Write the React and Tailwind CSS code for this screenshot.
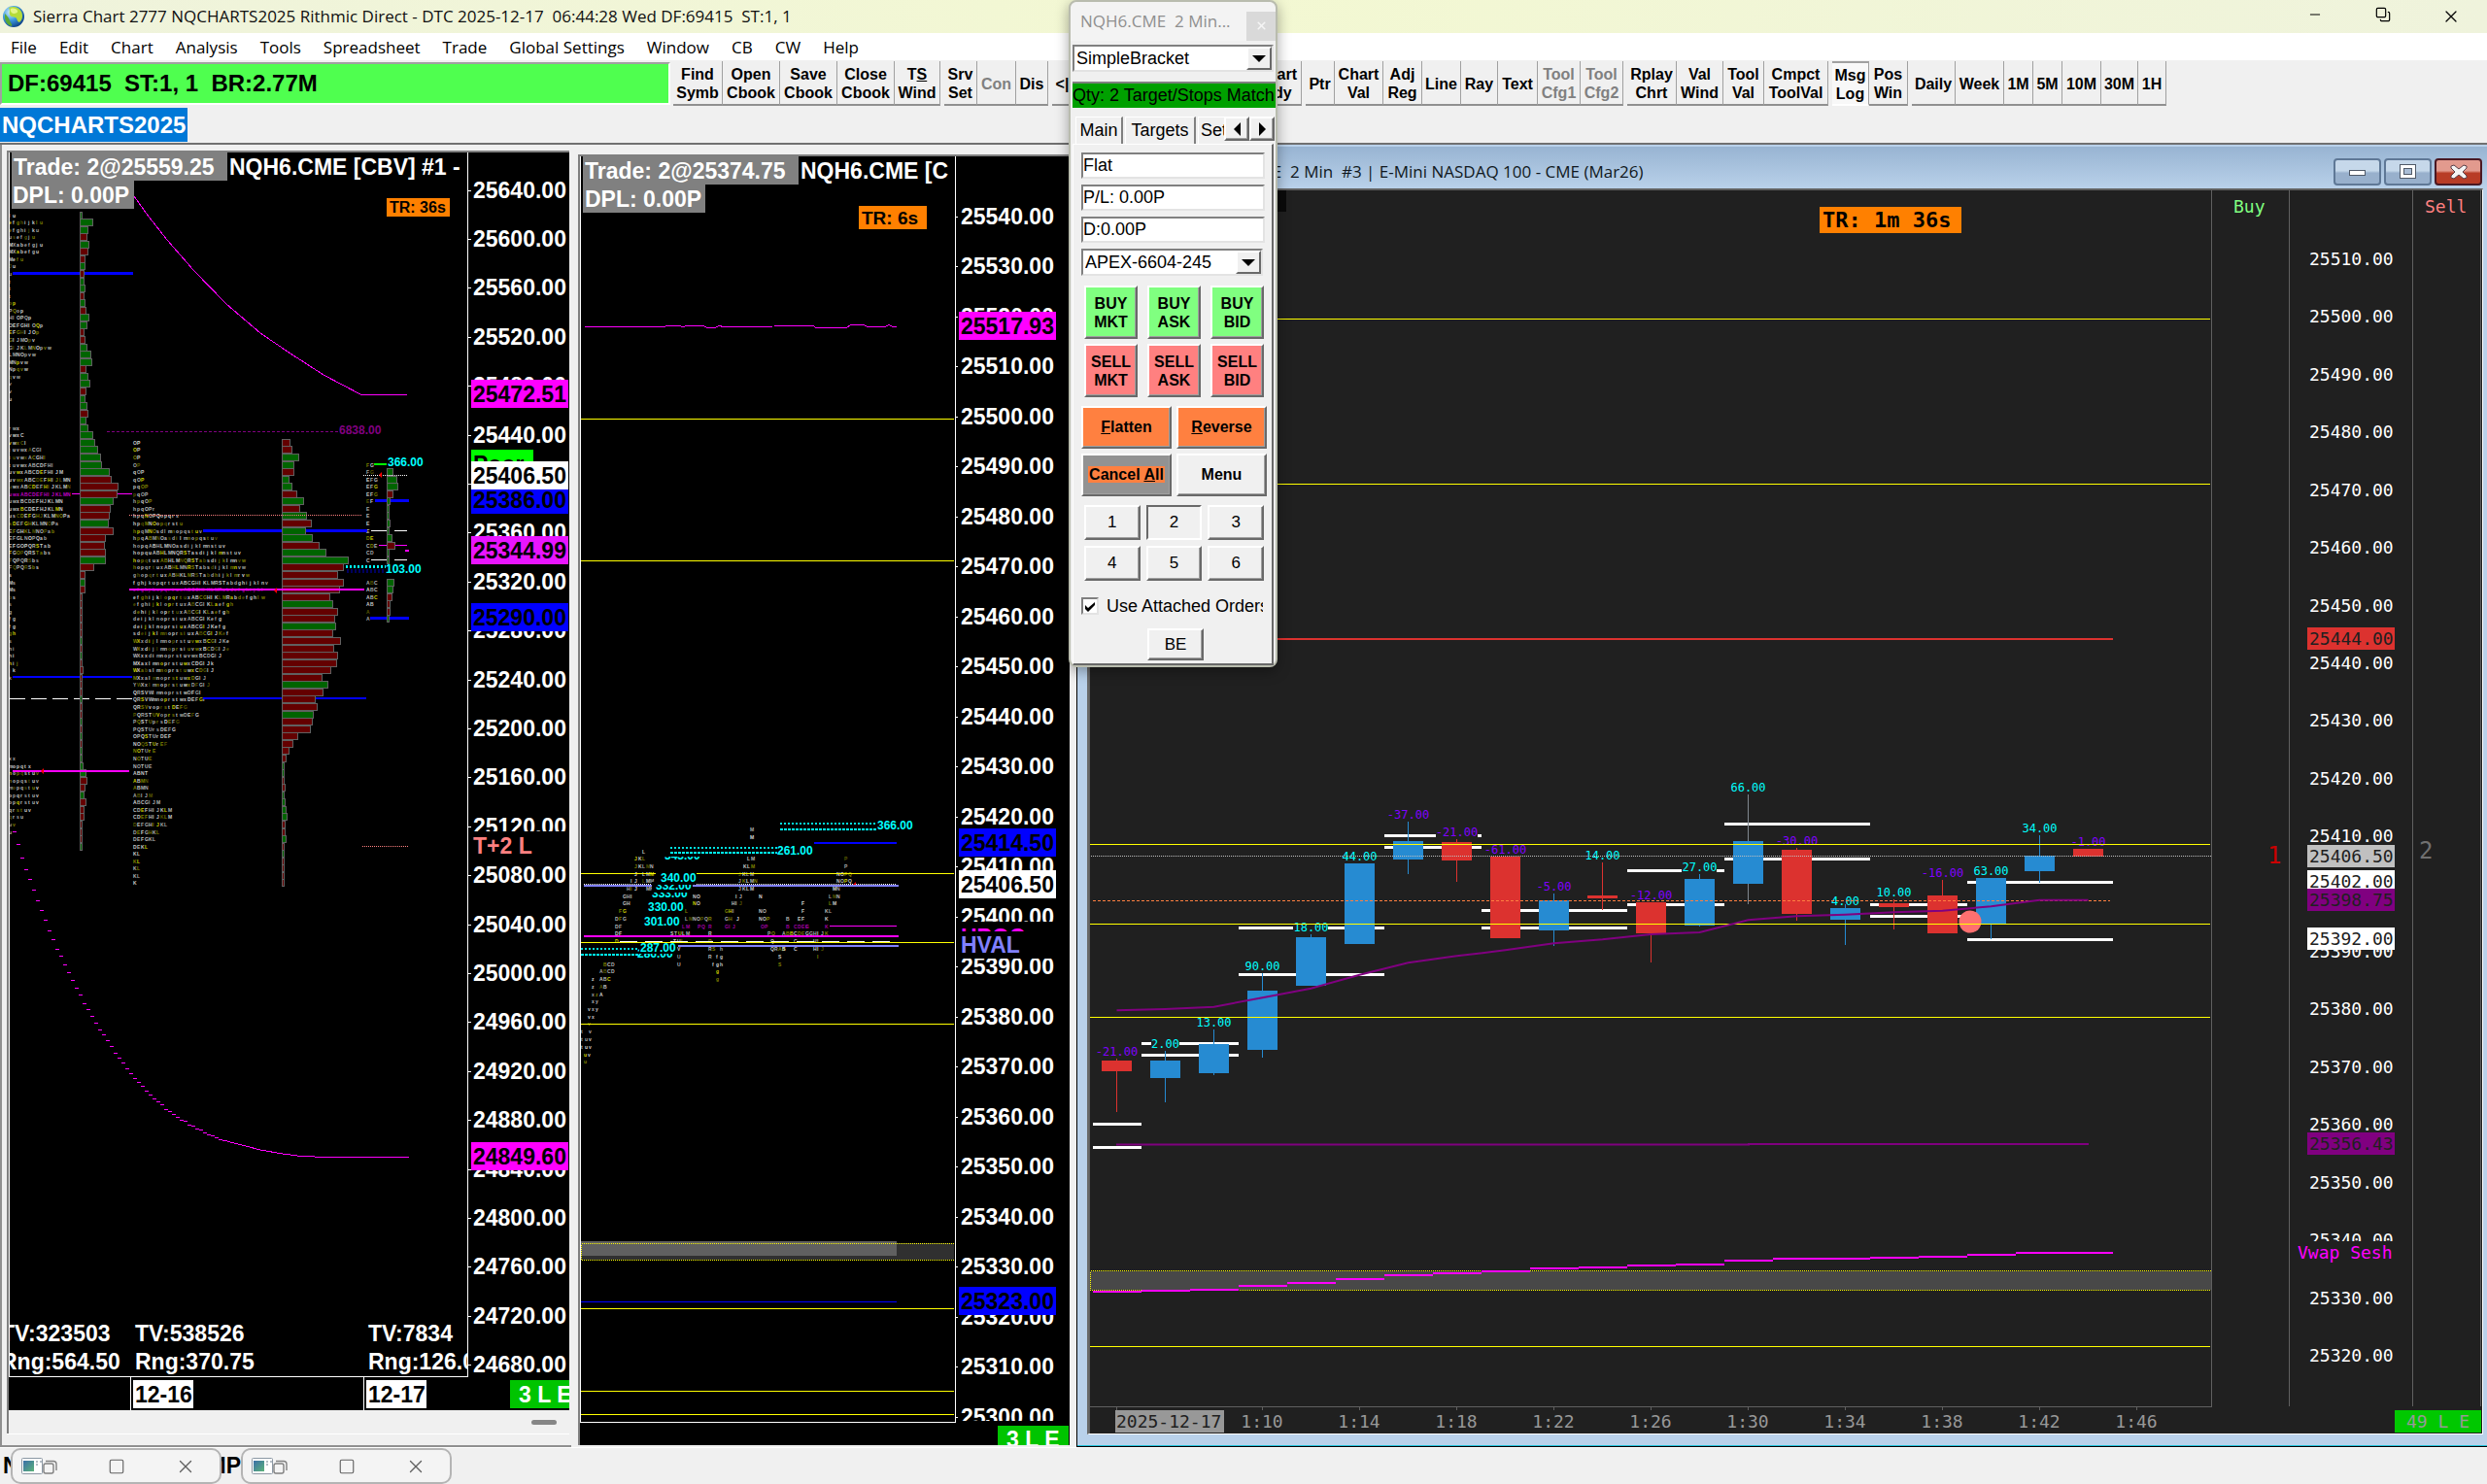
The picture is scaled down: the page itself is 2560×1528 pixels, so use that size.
import React from "react";
import { Minus, Copy, X, Square } from "lucide-react";

const ARIAL = "font-['Liberation_Sans',Arial,sans-serif]";
const SEGOE = "font-['Open_Sans','Noto_Sans',sans-serif]";
const MONO = "font-['DejaVu_Sans_Mono',monospace]";

const RAISED = "border-2 border-t-white border-l-white border-r-[#696969] border-b-[#696969]";
const SUNKEN = "border-2 border-t-[#808080] border-l-[#808080] border-r-[#e3e3e3] border-b-[#e3e3e3]";

/* ---------- chart primitives ---------- */

function H({ x1, x2, y, w = 1, c, dash }) {
  return <line x1={x1} x2={x2} y1={y} y2={y} stroke={c} strokeWidth={w} strokeDasharray={dash} shapeRendering="crispEdges" />;
}

function V({ x, y1, y2, w = 1, c }) {
  return <line x1={x} x2={x} y1={y1} y2={y2} stroke={c} strokeWidth={w} shapeRendering="crispEdges" />;
}

function Box({ x, y, w, h, c }) {
  return <rect x={x} y={y} width={w} height={h} fill={c} shapeRendering="crispEdges" />;
}

/* bold label of the two profile charts, centred on y */
function Big({ x, y, c = "#fff", children }) {
  return (
    <text x={x} y={y + 8} fill={c} className="text-[23px] font-bold whitespace-pre">
      {children}
    </text>
  );
}

function Small({ x, y, c = "#00ffff", children }) {
  return (
    <text x={x} y={y + 4} fill={c} className="text-[12px] font-bold">
      {children}
    </text>
  );
}

function Tag({ x, y, w = 100, h = 29, bg, c = "#000", children }) {
  return (
    <g>
      <Box x={x - 2} y={y} w={w} h={h} c={bg} />
      <Big x={x} y={y + h / 2} c={c}>{children}</Big>
    </g>
  );
}

const TPO_COLORS = ["#c8c8c8", "#b4b4b4", "#c8c8c8", "#d8d8d8", "#808000", "#c8c8c8", "#a8a8a8", "#d0d000", "#b8b8b8", "#5a5a00"];

/* one row of time-price letters, a cell of 4px per letter */
function Tpo({ x, y, s, seed, c }) {
  return (
    <text y={y + 2} className="text-[5px] font-bold">
      {s.split("").map((ch, i) =>
        ch === " " ? null : (
          <tspan key={i} x={x + i * 4} fill={c || TPO_COLORS[(seed * 7 + i * i * 3 + Math.floor((i + seed) / 3) * 5) % 10]}>
            {ch}
          </tspan>
        )
      )}
    </text>
  );
}

const rowY = (k) => 221.5 + k * 7.56;

function Histogram({ x, start, data }) {
  return (
    <g stroke="#606060" strokeWidth="1" shapeRendering="crispEdges">
      {data.map(([w, g], i) => (
        <rect key={i} x={x} y={Math.round(rowY(start + i) - 4)} width={w} height={7} fill={g ? "#006400" : "#640000"} />
      ))}
    </g>
  );
}

/* ---------- chart 1 ---------- */

const parse = (s) => s.split(" ").map((t) => [parseInt(t, 10), t.endsWith("g")]);

const HIST1 = parse(
  "2g 13g 8g 7r 9g 8r 5r 5g 4r 4g 5g 4r 5g 6r 9g 7g 4r 5r 7g 11g 12g 6r 8g 10g 6r 5g 7g 8r 6g 8g 13g 15g 18g 21g 22g 30g 32r 39r 38r 34g 31r 30r 29g 34r 26r 25r 26r 26g 14r 5r 5g 5r 2r 2r 2r 2r 2r 2r 2g 2r 2g 2r 3r 2r 2r 2r 2g 2r 2r 2g 2r 2g 2r 2g 2g 3g 6g 7r 5r 4g 6r 4r 4r 2r 2r 2r 2g"
);
const HIST2 = parse(
  "8r 10r 17g 12g 12r 7g 10g 15r 22g 18r 25g 30r 24g 31g 38r 45g 68g 63r 57r 63r 59r 49r 52g 57r 54r 55g 52r 60r 53r 57r 56r 50r 41r 47g 42r 34r 36r 32g 31r 29r 16r 11r 7r 4r 2g 2g 2r 3r 2g 3g 4g 5g 3r 3r 4g 2r 2g 2r 2r 2r 2r"
);
const HIST3A = parse("6g 10g 11g 6r 3g 2g 2g 3g 2g 5g 8r 2g 2g");
const HIST3B = parse("7g 6g 5r 3r 3r 2g");

const COL1 =
  "lu|efghijklu|efghijku|usefgju|MXabefgju|MXabefgu|Mefu|Ju|u|t|t|t|op|PQop|HIOPQp|OEFGHIOQp|EFGHIJOp|GIJMOpv|GIJKLMNOpvw|LMNOpvw|MNpvw|Npqvw|qvw|v|v|u||||rwx|vwxC|vwxCI|tuvwxACGI|tuvwxACGHI|tuvwxABCDFHI|uvwxABCDEFHIJM|uvwxABCDEFHIJLMN|uwxABCDEFHIJKLMN|uwxABCDEFHIJKLMN|uwxBCDEFHJKLMN|uwxBCDEFHJKLMN|usCDEFGHJKLMNOPa|sDEFGHKLMNOPa|EFGHKLMNOPab|EFGLNOPQab|EFGOPQRSTab|FGOPQRSTabs|FQPQRSbs|FQPQRSbs|s|Ms|Ms|bs|s|g|fg|fg|gh|s|hi|hi|hij|jk|k|||||||||||xx|mopqtx|nopqstuv|nopqstuv|mopqstuv|opqrstuv|opqrstuv|qrstuv|qrsu|uv|u".split("|");
const COL2 =
  "OP|OP|OP|OP|qOP|qOP|pqOP|pqOP|hpqOP|hpqOPr|hpqNOPQopqrs|hpqMNOopqrstu|hpqMNOsdlmnopqstuv|hpqABMNOasdilmnopqstuv|hopqABHLMNOasdijklmnstuv|hopquABHLMNQRSTasdijklmnstuv|hopqtuxABHLMNQRSTabsdijklmnvw|hopqrtuxABHLMNRSTabsdijklmnvw|ghopqrtuxABHKLMRSTabdhijklmrvw|fghjkopqrtuxABCGHIKLMRSTabdghijklnv|efghjkopqrtuxABCGHIKLMRabdefghijkl|efghijklopqrtuxABCGHIKLMRabdefghlw|efghijkloprtuxABCGIKLaefgh|dehijkloprtuxABCGIKLaefgh|deijklnoprsiuxABCGIKefg|deijklnoprsiuxABCGIJKefg|sdeijklmnoprsiuxABCGIJKef|WXxdijlmnoprstuvwxBCGIJKe|WXxdijlmnoprsiuvwxBCDGIJe|WXxxdimnoprstuvwxBCDGIJ|MXaxlmnoprstuwxCDGIJk|WXabslmnoprstuwxCDGIJ|MXxalmnoprstuwxDGIJ|YWXxlmnoprstuwxDFGIJ|QRSVWlmnoprstwDFGI|QRSVWmnoprstwxDEFGI|QRSVvoprstDEFG|PQRSTUVoprstwDEFG|PQSTUprsDEFG|PQSTUrsDEFG|OPQSTUrDEF|NOQSTUrEF|NOTUrE|NOTUE|NOTUE|ABNT|ABMN|ABMN|ABIJM|ABCGIJM|CDEFHIJKLM|CDEFHIJKLM|DEFGHIJKL|DEFGHKL|DEFGKL|DEKL|KL|KL|KL|KL|K".split("|");
const COL3 = "FG|FG|EFG|EFG|EFG|EF|E|E|E|E|DE|CDE|CD|C|||ABC|ABC|ABC|AB|A|A".split("|");

const LOWER = [354, 378, 402, 424, 443, 463, 483, 500, 518, 538, 555, 572, 586, 602, 616, 630, 645, 658, 673, 685, 697, 709, 722, 732, 743, 754, 765, 774, 784, 794, 803, 812, 820, 828, 836, 844, 850, 856, 862, 870, 875, 879, 885, 890, 893, 899, 902, 906, 909, 914, 917, 920, 923, 926, 929];

const PRICES1 = Array.from({ length: 25 }, (_, i) => 25640 - i * 40);

function ProfileChart() {
  return (
    <svg className={`block h-full w-full bg-black ${ARIAL}`} role="img" aria-label="NQH6.CME CBV #1">
      <clipPath id="plot1"><rect x="10" y="157" width="471" height="1260" /></clipPath>
      <g transform="translate(-9 -157)">
        <g clipPath="url(#plot1)">
          {COL1.map((s, k) => s && <Tpo key={k} x={9} y={rowY(k)} s={s} seed={k} c={k === 38 ? "#c000c0" : undefined} />)}
          {COL2.map((s, k) => <Tpo key={k} x={137} y={rowY(k + 31)} s={s} seed={k} c={k === 20 ? "#900090" : undefined} />)}
          {COL3.map((s, k) => s && <Tpo key={k} x={377} y={rowY(k + 34)} s={s} seed={k + 2} />)}

          <H x1={13} x2={137} y={281.5} w={3} c="#0000ff" />
          <H x1={209} x2={378} y={546.5} w={3} c="#0000ff" />
          <H x1={386} x2={421} y={515.5} w={3} c="#0000ff" />
          <H x1={381} x2={421} y={636.5} w={3} c="#0000ff" />
          <H x1={13} x2={136} y={697} w={2} c="#0000ff" />
          <H x1={209} x2={377} y={719} w={2} c="#0000ff" />
          <H x1={10} x2={136} y={719.5} c="#fff" dash="16 6" />
          <H x1={74} x2={136} y={508.5} c="#ff00ff" />

          <Histogram x={82.5} start={0} data={HIST1} />
          <Histogram x={290.5} start={31} data={HIST2} />
          <Histogram x={398.5} start={35} data={HIST3A} />
          <Histogram x={398.5} start={50} data={HIST3B} />

          <H x1={133} x2={375} y={607} w={2} c="#ff00ff" />
          <H x1={13} x2={133} y={794} w={2} c="#ff00ff" />
          <H x1={110} x2={349} y={444.5} c="#800080" dash="3 2" />
          <H x1={133} x2={372} y={530.5} c="#ff8080" dash="1 1" />
          <H x1={373} x2={420} y={871.5} c="#ff8080" dash="1 1" />
          <H x1={374} x2={419} y={489.5} c="#fff" dash="1 1" />
          <H x1={385} x2={398} y={478} w={2} c="#00ff00" />
          <H x1={382} x2={398} y={546.5} c="#fff" />
          <H x1={406} x2={419} y={546.5} c="#fff" />
          <H x1={382} x2={398} y={576.5} c="#fff" />
          <H x1={406} x2={419} y={576.5} c="#fff" />
          <H x1={390} x2={398} y={561.5} c="#ff00ff" />
          <H x1={407} x2={419} y={561.5} c="#ff00ff" />
          <Box x={417} y={566} w={4} h={2} c="#ff00ff" />
          <H x1={356} x2={397} y={583.5} w={3} c="#00ffff" dash="2 2" />
          <H x1={357} x2={397} y={588} w={4} c="#000060" dash="2 2" />
          <path d="M393 486 l-3 3 3 3z M285 605 l-3 3 3 3z M45 791 l-3 3 3 3z" fill="#f00" />

          <Small x={349} y={443} c="#800080">6838.00</Small>
          <Small x={399} y={476}>366.00</Small>
          <Small x={397} y={586}>103.00</Small>

          <polyline
            points="138,202 153,223 172,247 199,278 233,313 268,343 299,364 333,386 371,406 419,406"
            fill="none" stroke="#ff00ff" strokeWidth="1" shapeRendering="crispEdges"
          />
          {LOWER.map((v, i) => (
            <H key={i} x1={13 + i * 4} x2={17 + i * 4} y={Math.round(660 + v / 1.806) + 0.5} c="#ff00ff" />
          ))}
          <polyline
            points="230,1174 241,1177 253,1180 268,1184 291,1188 306,1190 333,1191.5 421,1191.5"
            fill="none" stroke="#ff00ff" strokeWidth="1" shapeRendering="crispEdges"
          />

          <Big x={1} y={1373}>TV:323503</Big>
          <Big x={1} y={1402}>Rng:564.50</Big>
          <Big x={139} y={1373}>TV:538526</Big>
          <Big x={139} y={1402}>Rng:370.75</Big>
          <Big x={379} y={1373}>TV:7834</Big>
          <Big x={379} y={1402}>Rng:126.00</Big>

          <Box x={12} y={157} w={222} h={29} c="#808080" />
          <Box x={12} y={186} w={126} h={29} c="#808080" />
          <Big x={14} y={172}>Trade: 2@25559.25</Big>
          <Big x={236} y={172}>NQH6.CME [CBV] #1 -</Big>
          <Big x={13} y={201}>DPL: 0.00P</Big>
          <Box x={398} y={204} w={65} h={19} c="#ff8000" />
          <text x={401} y={219} className="text-[16px] font-bold">TR: 36s</text>
        </g>

        <V x={9.5} y1={157} y2={1417} c="#fff" />
        <V x={481.5} y1={157} y2={1418} c="#fff" />
        <H x1={9} x2={482} y={1417.5} c="#fff" />
        {PRICES1.map((p, i) => {
          const y = Math.round(195.5 + i * 50.4);
          return (
            <g key={p}>
              <H x1={482} x2={485} y={y + 0.5} c="#fff" />
              <Big x={487} y={y}>{p.toFixed(2)}</Big>
            </g>
          );
        })}
        <Tag x={487} y={391} bg="#ff00ff">25472.51</Tag>
        <Tag x={487} y={463} w={64} bg="#00ff00">Poor</Tag>
        <Tag x={487} y={500} bg="#0000ff">25386.00</Tag>
        <Tag x={487} y={475} bg="#ffffff">25406.50</Tag>
        <Tag x={487} y={552} bg="#e815ff">25344.99</Tag>
        <Tag x={487} y={621} bg="#0000ff">25290.00</Tag>
        <Tag x={487} y={856} bg="#000" c="#ff8080">T+2 L</Tag>
        <Tag x={487} y={1176} bg="#ff00ff">24849.60</Tag>

        <V x={134.5} y1={1417} y2={1452} c="#fff" />
        <V x={374.5} y1={1417} y2={1452} c="#fff" />
        <Tag x={139} y={1421} w={62} bg="#fff">12-16</Tag>
        <Tag x={379} y={1421} w={62} bg="#fff">12-17</Tag>
        <Box x={525} y={1421} w={62} h={29} c="#00c400" />
        <Big x={534} y={1436}>3 L E</Big>
      </g>
    </svg>
  );
}

/* ---------- chart 2 ---------- */

const PRICES2 = Array.from({ length: 25 }, (_, i) => 25540 - i * 10);

const SWING = [
  [661, 877, "L"], [653, 884, "JKL"], [653, 892, "JK"], [661, 892, "LMN"], [653, 900, "J"], [661, 900, "LMM"], [649, 907, "IJ"], [661, 907, "LMM"],
  [645, 915, "HIJ"], [665, 915, "MN"], [641, 923, "GHI"], [641, 930, "GH"], [637, 938, "FG"], [633, 946, "DFG"], [633, 954, "DF"], [633, 961, "DF"],
  [633, 969, "D"], [621, 993, "BCD"], [617, 1000, "ABCD"], [609, 1008, "z"], [617, 1008, "ABC"], [609, 1016, "z"], [617, 1016, "AB"], [609, 1024, "xzA"],
  [609, 1031, "xy"], [605, 1039, "vxy"], [605, 1047, "vx"], [605, 1054, "v"], [598, 1062, "t v"], [598, 1070, "tuv"], [598, 1078, "tuv"], [601, 1086, "uv"], [601, 1093, "u"],
  [772, 854, "M"], [772, 862, "M"], [769, 884, "LM"], [765, 892, "KLM"], [760, 900, "JKLM"], [760, 907, "JKLMN"], [760, 915, "JKLM"], [757, 923, "IJ"],
  [753, 930, "HIJ"], [746, 938, "GHI"], [746, 946, "GH J"], [746, 954, "GIJ"], [713, 923, "NO"], [713, 930, "NO"], [705, 938, "L"], [705, 946, "LMNOPQR"],
  [702, 954, "LM  PQ"], [690, 961, "STULM"], [693, 969, "TUL"], [693, 977, "UV"], [697, 985, "U"], [697, 993, "U"], [729, 954, "R"], [729, 961, "R"],
  [729, 969, "R"], [729, 977, "RS"], [729, 985, "R fg"], [733, 993, "fgh"], [737, 1000, "g"], [737, 1008, "g"], [741, 977, "h"], [781, 923, "N"],
  [781, 938, "NO"], [781, 946, "NOP"], [783, 954, "OP"], [790, 961, "PQ"], [793, 969, "Q"], [793, 977, "QR S"], [801, 985, "S"], [801, 993, "S"],
  [805, 961, "AB"], [809, 946, "B"], [809, 954, "B"], [813, 961, "BCDE"], [801, 977, "AB"], [817, 954, "CDEF"], [825, 930, "F"], [825, 938, "F"],
  [821, 946, "EF"], [825, 961, "FG"], [829, 954, "G"], [833, 961, "GHI"], [837, 969, "HI"], [837, 977, "HIJ"], [841, 985, "I"], [845, 961, "JK"],
  [849, 938, "KL"], [849, 946, "K"], [849, 954, "K"], [853, 930, "LM"], [853, 923, "LMN"], [857, 915, "MN"], [861, 907, "NOPQ"], [861, 900, "NOPQ"],
  [869, 884, "P"], [869, 892, "P"], [817, 969, "C"], [817, 977, "C"],
];

function Hatch({ x1, x2, y, gap = 5 }) {
  return (
    <g>
      <H x1={x1} x2={x2} y={y + 0.5} w={2} c="#00e0e0" dash="2 2" />
      <H x1={x1} x2={x2} y={y + gap + 0.5} w={2} c="#00ffff" dash="3 1" />
    </g>
  );
}

function SwingChart() {
  return (
    <svg className={`block h-full w-full bg-black ${ARIAL}`} role="img" aria-label="NQH6.CME profile #2">
      <clipPath id="plot2"><rect x="598" y="161" width="384" height="1303" /></clipPath>
      <g transform="translate(-597 -161)">
        <g clipPath="url(#plot2)">
          {SWING.map(([x, y, s], i) => <Tpo key={i} x={x} y={y} s={s} seed={i} c={y === 954 && x > 700 ? "#a000a0" : undefined} />)}
          {[431.5, 577.5, 899.5, 970.5, 1054.5, 1347.5, 1432.5, 1456.5].map((y) => <H key={y} x1={598} x2={982} y={y} c="#ffff00" />)}
          <polyline
            points="602,336.5 684,336.5 688,335 700,335.5 703,337 706,335.5 724,335.5 728,337.5 736,337.5 740,335.5 745,336.5 797,336 837,335.5 840,337.5 871,337.5 876,334.5 889,334.5 893,336.5 911,336.5 915,334.5 919,336.5 923,336.5"
            fill="none" stroke="#ff00ff" strokeWidth="1" shapeRendering="crispEdges"
          />
          <H x1={838} x2={923} y={868} w={2} c="#0000ff" />
          <H x1={601} x2={923} y={910.5} c="#fff" dash="1 1" />
          <H x1={601} x2={925} y={912} w={2} c="#8080ff" />
          <H x1={854} x2={923} y={953.5} c="#ff00ff" />
          <H x1={601} x2={925} y={964} w={2} c="#ff00ff" />
          <H x1={638} x2={921} y={969.5} c="#fff" dash="18 8" />
          <H x1={698} x2={925} y={974} w={2} c="#8080ff" />
          <H x1={598} x2={923} y={1340.5} c="#0000ff" />
          <Box x={598} y={1280} w={384} h={17} c="#303030" />
          <Box x={598} y={1278} w={325} h={15} c="#606060" />
          <rect x={598.5} y={1280.5} width={390} height={17} fill="none" stroke="#ffff00" strokeDasharray="1 1" shapeRendering="crispEdges" />

          <Small x={684} y={881}>343.00</Small>
          <Box x={684} y={870} w={50} h={12} c="#000" />
          <Hatch x1={803} x2={903} y={847} gap={6} />
          <Hatch x1={690} x2={800} y={872} />
          <Hatch x1={598} x2={659} y={976} gap={6} />
          <Small x={903} y={850}>366.00</Small>
          <Small x={800} y={876}>261.00</Small>
          <Box x={671} y={908} w={42} h={20} c="#000" />
          <Small x={671} y={920}>333.00</Small>
          <Box x={671} y={908} w={42} h={11} c="#000" />
          <Small x={675} y={912}>332.00</Small>
          <Box x={675} y={899} w={42} h={12} c="#000" />
          <Small x={680} y={904}>340.00</Small>
          <Small x={667} y={934}>330.00</Small>
          <Small x={663} y={949}>301.00</Small>
          <Small x={656} y={982}>286.00</Small>
          <Box x={658} y={971} w={39} h={11} c="#000" />
          <Small x={659} y={976}>287.00</Small>
          <path d="M881 908 l-3 3 3 0z" fill="#f00" />

          <Box x={600} y={161} w={222} h={29} c="#808080" />
          <Box x={600} y={190} w={126} h={29} c="#808080" />
          <Big x={602} y={176}>Trade: 2@25374.75</Big>
          <Big x={824} y={176}>NQH6.CME [C</Big>
          <Big x={602} y={205}>DPL: 0.00P</Big>
          <Box x={884} y={212} w={70} h={24} c="#ff8000" />
          <text x={887} y={231} className="text-[19px] font-bold">TR: 6s</text>
        </g>

        <V x={597.5} y1={161} y2={1464} c="#fff" />
        <V x={983.5} y1={161} y2={1465} c="#fff" />
        <H x1={597} x2={984} y={1464.5} c="#fff" />
        {PRICES2.map((p, i) => {
          const y = Math.round(222.5 + i * 51.5);
          return (
            <g key={p}>
              <H x1={984} x2={986} y={y + 0.5} c="#fff" />
              <Big x={989} y={y}>{p.toFixed(2)}</Big>
            </g>
          );
        })}
        <Tag x={989} y={321} bg="#ff00ff">25517.93</Tag>
        <Tag x={989} y={853} bg="#0000ff">25414.50</Tag>
        <Tag x={989} y={896} bg="#ffffff">25406.50</Tag>
        <Tag x={989} y={949} h={31} bg="#000" c="#ff00ff">HPOC</Tag>
        <Tag x={989} y={959} h={28} bg="#000" c="#8080ff">HVAL</Tag>
        <Tag x={989} y={1325} bg="#0000ff">25323.00</Tag>
        <Box x={987} y={1463} w={110} h={10} c="#000" />
        <Box x={1027} y={1468} w={73} h={29} c="#00c400" />
        <Big x={1036} y={1482}>3 L E</Big>
      </g>
    </svg>
  );
}

/* ---------- chart 3 ---------- */

const cy = (v) => 780 + v / 3;
/* high, body top, body bottom, low, up, label, label centre */
const CANDLES = [
  [930, 936, 969, 1095, 0, "-21.00", 909], [906, 936, 990, 1065, 1, "2.00", 886], [840, 885, 975, 981, 1, "13.00", 820],
  [666, 720, 903, 927, 1, "90.00", 645], [546, 555, 705, 705, 1, "18.00", 526], [327, 327, 576, 576, 1, "44.00", 306],
  [198, 258, 315, 360, 1, "-37.00", 177], [252, 261, 318, 384, 0, "-21.00", 232], [306, 306, 558, 558, 0, "-61.00", 286],
  [420, 441, 534, 582, 1, "-5.00", 400], [324, 426, 435, 471, 0, "14.00", 303], [447, 447, 543, 633, 0, "-12.00", 427],
  [360, 375, 519, 522, 1, "27.00", 340], [114, 258, 390, 453, 1, "66.00", 93], [279, 285, 483, 504, 0, "-30.00", 258],
  [453, 465, 501, 579, 1, "4.00", 445], [438, 450, 462, 531, 0, "10.00", 417], [378, 426, 543, 543, 0, "-16.00", 358],
  [372, 372, 514, 561, 1, "63.00", 352], [240, 303, 351, 387, 1, "34.00", 219], [282, 282, 305, 305, 0, "-1.00", 261],
];
const RANGES = [
  [1125, 1175, 1132, 1204], [1175, 1275, 883, 919], [1275, 1425, 526, 670], [1425, 1525, 241, 277], [1525, 1675, 472, 526],
  [1675, 1775, 349, 454], [1775, 1925, 205, 313], [1925, 2025, 454, 490], [2025, 2175, 385, 562],
];
const AVG = [781, 777, 770, 742, 713, 671, 634, 613, 595, 574, 562, 546, 540, 502, 490, 485, 478, 473, 460, 440, 440];
const VWAP = [390, 387, 384, 372, 363, 351, 339, 333, 327, 318, 315, 309, 306, 294, 288, 288, 285, 282, 276, 270, 270];
const PRICES3 = Array.from({ length: 20 }, (_, i) => 25510 - i * 10);
const TIMES = ["1:10", "1:14", "1:18", "1:22", "1:26", "1:30", "1:34", "1:38", "1:42", "1:46"];

function MTag({ y, bg, c = "#202020", children }) {
  return (
    <g>
      <Box x={2375} y={y} w={90} h={23} c={bg} />
      <text x={2377} y={y + 18} fill={c}>{children}</text>
    </g>
  );
}

function CandleChart() {
  return (
    <svg className={`block h-full w-full bg-[#202020] text-[18px] ${MONO}`} role="img" aria-label="NQH6.CME 2 Min #3">
      <g transform="translate(-1121 -196)">
        <Box x={1315} y={196} w={9} h={22} c="#0a0a0a" />
        <Box x={1122} y={1309} w={1154} h={19} c="#484848" />
        <rect x={1122.5} y={1308.5} width={1154} height={20} fill="none" stroke="#ffff00" strokeDasharray="1 1" shapeRendering="crispEdges" />
        {RANGES.map(([a, b, t, l]) => (
          <g key={a}>
            <H x1={a} x2={b} y={cy(t)} w={3} c="#fff" />
            <H x1={a} x2={b} y={cy(l)} w={3} c="#fff" />
          </g>
        ))}
        {CANDLES.map(([h, t, b, l, up, label, ly], i) => {
          const x = 1149.5 + i * 50;
          const c = up ? "#268bd2" : "#dc322f";
          const w = label.length * 7;
          return (
            <g key={i}>
              <Box x={x - w / 2 - 1} y={cy(ly) - 5} w={w + 1} h={10} c="#202020" />
              <V x={x} y1={cy(h)} y2={cy(l)} c={i === 13 ? "#808890" : c} />
              <Box x={x - 15.5} y={cy(t)} w={31} h={Math.max(cy(b) - cy(t), 3)} c={c} />
              <text x={x} y={cy(ly) + 4} textAnchor="middle" fill={label[0] === "-" ? "#8000ff" : "#00ffff"} className="text-[12px]">{label}</text>
            </g>
          );
        })}
        <circle cx={2028} cy={949} r={11.5} fill="#ff7070" />
        <H x1={1125} x2={2172} y={927.5} c="#ff8040" dash="3 2" />
        <H x1={1123} x2={2277} y={881.5} c="#c0c0c0" dash="1 1" />
        {[328.5, 498.5, 869.5, 951.5, 1047.5, 1386.5].map((y) => <H key={y} x1={1122} x2={2275} y={y} c="#ffff00" />)}
        <H x1={1122} x2={2175} y={658} w={2} c="#dc322f" />
        <polyline points={AVG.map((v, i) => `${1149.5 + i * 50},${cy(v)}`).join(" ")} fill="none" stroke="#800080" strokeWidth="2" />
        <polyline points="1149,1178.5 1800,1178.5 1800,1178 2150,1178" fill="none" stroke="#800080" strokeWidth="2" />
        {VWAP.map((v, i) => <H key={i} x1={1125 + i * 50} x2={1175 + i * 50} y={1200 + v / 3} w={2} c="#ff00ff" />)}

        <V x={1121.5} y1={196} y2={1476} c="#606060" />
        <V x={2276.5} y1={196} y2={1448} c="#606060" />
        <V x={2356.5} y1={196} y2={1448} c="#606060" />
        <V x={2483.5} y1={196} y2={1448} c="#606060" />
        <V x={2553.5} y1={196} y2={1448} c="#606060" />
        <H x1={1121} x2={2277} y={1448.5} c="#606060" />

        {PRICES3.map((p, i) => (
          <text key={p} x={2377} y={Math.round(267 + i * 59.42) + 6} fill="#fff">{p.toFixed(2)}</text>
        ))}
        <MTag y={646} bg="#dc322f">25444.00</MTag>
        <MTag y={870} bg="#c0c0c0">25406.50</MTag>
        <MTag y={896} bg="#ffffff">25402.00</MTag>
        <MTag y={915} bg="#800080">25398.75</MTag>
        <MTag y={955} bg="#ffffff">25392.00</MTag>
        <MTag y={1166} bg="#800080">25356.43</MTag>
        <Box x={2363} y={1278} w={104} h={24} c="#202020" />
        <text x={2365} y={1296} fill="#ff00ff">Vwap Sesh</text>

        <text x={2299} y={219} fill="#80ff80">Buy</text>
        <text x={2496} y={219} fill="#ff8080">Sell</text>
        <text x={2334} y={889} fill="#cc0000" className="text-[24px]">1</text>
        <text x={2490} y={884} fill="#707070" className="text-[24px]">2</text>

        <Box x={1873} y={213} w={146} h={27} c="#ff8000" />
        <text x={1876} y={234} className="text-[22px] font-bold">TR: 1m 36s</text>

        <V x={1149.5} y1={1448} y2={1452} c="#606060" />
        <Box x={1148} y={1452} w={112} h={23} c="#989898" />
        <text x={1149} y={1470} fill="#202020">2025-12-17</text>
        {TIMES.map((t, i) => (
          <g key={t}>
            <V x={1299.5 + i * 100} y1={1448} y2={1452} c="#606060" />
            <text x={1299 + i * 100} y={1470} textAnchor="middle" fill="#989898">{t}</text>
          </g>
        ))}
        <Box x={2465} y={1452} w={89} h={23} c="#00c800" />
        <text x={2477} y={1470} fill="#989898">49 L E</text>
      </g>
    </svg>
  );
}

/* ---------- frame ---------- */

const MENU = ["File", "Edit", "Chart", "Analysis", "Tools", "Spreadsheet", "Trade", "Global Settings", "Window", "CB", "CW", "Help"];

function Tool({ w, a, b, dim, pressed, children }) {
  return (
    <button
      type="button"
      disabled={dim}
      className={`flex h-[46px] shrink-0 flex-col items-center justify-center border-r border-b-2 border-[#a0a0a0] border-b-[#909090] pt-[2px] text-[16px] leading-[19px] font-bold whitespace-nowrap ${w} ${dim ? "text-[#808080]" : "text-black"} ${pressed ? "border-t-2 border-b-white bg-[#f8f8f8]" : "bg-[#f0f0f0]"}`}
    >
      {children || (
        <>
          <span>{a}</span>
          {b && <span>{b}</span>}
        </>
      )}
    </button>
  );
}

function Globe() {
  return (
    <svg className="h-6 w-6" viewBox="0 0 24 24" aria-hidden="true">
      <defs>
        <radialGradient id="sea" cx="35%" cy="30%" r="75%">
          <stop offset="0" stopColor="#d8f4ff" />
          <stop offset="0.5" stopColor="#3d9be0" />
          <stop offset="1" stopColor="#0c3f86" />
        </radialGradient>
      </defs>
      <circle cx="12" cy="12" r="11" fill="url(#sea)" />
      <path d="M7 3c5-2 10-1 13 4 2 4 1 9-2 11-3-1-2-4-4-5s-5 0-6-3 1-3-1-7z" fill="#b5dc3a" />
      <path d="M3 9c2 2 4 4 5 7s3 4 2 6c-4-1-8-5-7-13z" fill="#5aa834" />
      <path d="M9 4c3-1 6 0 7 2s-2 3-4 3-4-3-3-5z" fill="#e4f58a" />
    </svg>
  );
}

function Header() {
  return (
    <header>
      <div className={`flex h-[34px] items-center bg-gradient-to-r from-[#eff3dc] via-[#f3f8d2] to-[#eff3dc] pr-[2px] pl-[2px] ${SEGOE}`}>
        <Globe />
        <h1 className="ml-2 text-[17px] whitespace-pre text-[#101010]">
          {"Sierra Chart 2777 NQCHARTS2025 Rithmic Direct - DTC 2025-12-17  06:44:28 Wed DF:69415  ST:1, 1"}
        </h1>
        <div className="ml-auto flex">
          <button type="button" aria-label="Minimize" className="flex w-[70px] justify-center"><Minus size={16} strokeWidth={1.5} /></button>
          <button type="button" aria-label="Restore" className="flex w-[70px] justify-center"><Copy size={16} strokeWidth={1.8} className="-scale-x-100 rotate-90" /></button>
          <button type="button" aria-label="Close" className="flex w-[70px] justify-center"><X size={20} strokeWidth={1.5} /></button>
        </div>
      </div>
      <nav className={`flex h-[28px] items-center gap-[23px] bg-white pt-[2px] pl-[11px] text-[17px] text-black ${SEGOE}`}>
        {MENU.map((m) => <button key={m} type="button" className="whitespace-nowrap">{m}</button>)}
      </nav>
      <div className="flex h-[48px] items-center">
        <input
          aria-label="Status"
          readOnly
          value="DF:69415  ST:1, 1  BR:2.77M"
          className="mr-[3px] h-[44px] w-[690px] border-2 border-t-[#a0a0a0] border-r-white border-b-white border-l-[#a0a0a0] bg-[#4fff4f] pl-[6px] text-[24px] font-bold text-black outline-none"
        />
        <div className="mr-[4px] flex">
          <Tool w="w-[51px]" a="Find" b="Symb" />
          <Tool w="w-[59px]" a="Open" b="Cbook" />
          <Tool w="w-[59px]" a="Save" b="Cbook" />
          <Tool w="w-[59px]" a="Close" b="Cbook" />
          <Tool w="w-[47px]"><span>T<u>S</u></span><span>Wind</span></Tool>
        </div>
        <div className="mr-[4px] flex">
          <Tool w="w-[34px]" a="Srv" b="Set" />
          <Tool w="w-[40px]" a="Con" dim />
          <Tool w="w-[33px]" a="Dis" />
        </div>
        <div className="mr-[4px] flex">
          <Tool w="w-[22px]" a="<|" />
          <Tool w="w-[43px]" a="|>" />
          <Tool w="w-[128px]" a="Spreadsheet" b="Study" />
          <Tool w="w-[64px]" a="Restart" b="Study" />
        </div>
        <div className="mr-[4px] flex">
          <Tool w="w-[30px]" a="Ptr" />
          <Tool w="w-[50px]" a="Chart" b="Val" />
          <Tool w="w-[40px]" a="Adj" b="Reg" />
          <Tool w="w-[40px]" a="Line" />
          <Tool w="w-[38px]" a="Ray" />
          <Tool w="w-[41px]" a="Text" />
          <Tool w="w-[44px]" a="Tool" b="Cfg1" dim />
          <Tool w="w-[44px]" a="Tool" b="Cfg2" dim />
        </div>
        <div className="mr-[4px] flex">
          <Tool w="w-[51px]" a="Rplay" b="Chrt" />
          <Tool w="w-[48px]" a="Val" b="Wind" />
          <Tool w="w-[42px]" a="Tool" b="Val" />
          <Tool w="w-[66px]" a="Cmpct" b="ToolVal" />
        </div>
        <div className="mr-[4px] flex">
          <Tool w="w-[38px]" a="Msg" b="Log" pressed />
          <Tool w="w-[40px]" a="Pos" b="Win" />
        </div>
        <div className="flex">
          <Tool w="w-[45px]" a="Daily" />
          <Tool w="w-[50px]" a="Week" />
          <Tool w="w-[30px]" a="1M" />
          <Tool w="w-[30px]" a="5M" />
          <Tool w="w-[40px]" a="10M" />
          <Tool w="w-[38px]" a="30M" />
          <Tool w="w-[29px]" a="1H" />
        </div>
      </div>
      <div className="flex h-[39px] items-start border-b-2 border-[#707070] pt-px">
        <button type="button" className="h-[35px] bg-[#0078d7] px-[2px] text-[24px] leading-[35px] font-bold text-white">NQCHARTS2025</button>
      </div>
    </header>
  );
}

/* ---------- floating order panel ---------- */

function Dropdown({ label, value, w }) {
  return (
    <div className={`flex h-[28px] items-stretch bg-white ${SUNKEN} ${w}`}>
      <select aria-label={label} className="min-w-0 flex-1 appearance-none bg-white pl-[2px] text-[18px] leading-[24px] text-black outline-none">
        <option>{value}</option>
      </select>
      <span className={`pointer-events-none flex w-[26px] items-center justify-center bg-[#f0f0f0] ${RAISED}`}>
        <svg className="h-[7px] w-[14px]" viewBox="0 0 14 7" aria-hidden="true"><path d="M0 0h14L7 7z" /></svg>
      </span>
    </div>
  );
}

function Btn({ className, children }) {
  return <button type="button" className={`${RAISED} shadow-[inset_-1px_-1px_0_#a0a0a0] ${className}`}>{children}</button>;
}

function OrderPanel() {
  return (
    <aside className="absolute top-0 left-[1100px] flex w-[215px] flex-col rounded-lg border-2 border-[#b9bcae] bg-[#f0f0f0] text-black shadow-[0_4px_14px_rgba(0,0,0,0.35)]">
      <div className={`flex h-[40px] items-center rounded-t-lg bg-[#f3f3f3] pl-[10px] text-[17px] text-[#8f8f8f] ${SEGOE}`}>
        <span className="flex-1 whitespace-pre">{"NQH6.CME  2 Min..."}</span>
        <button type="button" aria-label="Close order panel" className="mt-[9px] flex h-[30px] w-[30px] items-center justify-center bg-[#d9d9d9] text-[#f5f5f5]">
          <X size={13} strokeWidth={3} />
        </button>
      </div>
      <div className="mt-[4px] ml-[2px]"><Dropdown label="Order configuration" value="SimpleBracket" w="w-[207px]" /></div>
      <output className="mt-[10px] ml-[2px] h-[27px] overflow-hidden border-t-2 border-[#808080] bg-[#00a000] text-[18px] leading-[25px] whitespace-nowrap">Qty: 2 Target/Stops Match</output>

      <div className="mt-[9px] ml-[5px] flex h-[28px] text-[18px] leading-[27px]">
        <button type="button" className="w-[49px] border-t border-r-2 border-l border-t-white border-r-[#808080] border-l-white">Main</button>
        <button type="button" className="ml-[2px] w-[73px] border-t border-r-2 border-l border-t-white border-r-[#808080] border-l-white">Targets</button>
        <button type="button" className="ml-[2px] w-[27px] overflow-hidden border-t border-l border-white pl-[2px] text-left whitespace-nowrap">Settings</button>
        <Btn className="flex h-[25px] w-[26px] items-center justify-center bg-[#f0f0f0]">
          <svg className="h-[14px] w-[7px]" viewBox="0 0 7 14" role="img" aria-label="Previous tab"><path d="M7 0v14L0 7z" /></svg>
        </Btn>
        <Btn className="flex h-[25px] w-[26px] items-center justify-center bg-[#f0f0f0]">
          <svg className="h-[14px] w-[7px]" viewBox="0 0 7 14" role="img" aria-label="Next tab"><path d="M0 0v14l7-7z" /></svg>
        </Btn>
      </div>

      <div className="ml-[2px] mr-[2px] flex flex-col border-r-2 border-b-2 border-l border-t border-t-white border-r-[#696969] border-b-[#696969] border-l-white pt-[8px] pl-[8px]">
        <div className="flex flex-col gap-[6px]">
          <input aria-label="Position" readOnly value="Flat" className={`h-[27px] w-[189px] bg-white text-[18px] outline-none ${SUNKEN}`} />
          <input aria-label="Open profit and loss" readOnly value="P/L: 0.00P" className={`h-[27px] w-[189px] bg-white text-[18px] outline-none ${SUNKEN}`} />
          <input aria-label="Daily profit and loss" readOnly value="D:0.00P" className={`h-[27px] w-[189px] bg-white text-[18px] outline-none ${SUNKEN}`} />
          <Dropdown label="Account" value="APEX-6604-245" w="w-[187px]" />
        </div>
        <div className="mt-[10px] ml-[3px] grid w-[185px] grid-cols-3 gap-x-[10px] gap-y-[5px] text-[16px] leading-[19px] font-bold">
          {["MKT", "ASK", "BID"].map((t) => <Btn key={t} className="h-[55px] bg-[#80ff80]">BUY<br />{t}</Btn>)}
          {["MKT", "ASK", "BID"].map((t) => <Btn key={t} className="h-[55px] bg-[#ff8080]">SELL<br />{t}</Btn>)}
        </div>
        <div className="mt-[9px] grid w-[191px] grid-cols-2 gap-x-[5px] gap-y-[5px] text-[16px] font-bold">
          <Btn className="h-[44px] bg-[#ff8040]"><u>F</u>latten</Btn>
          <Btn className="h-[44px] bg-[#ff8040]"><u>R</u>everse</Btn>
          <Btn className="h-[44px] bg-[#929292] whitespace-nowrap"><span className="bg-[#ff8040] px-px">Cancel <u>A</u>ll</span></Btn>
          <Btn className="h-[44px] bg-[#f0f0f0]">Menu</Btn>
        </div>
        <div className="mt-[9px] ml-[3px] grid w-[185px] grid-cols-3 gap-[6px] text-[17px]">
          {[1, 2, 3, 4, 5, 6].map((n) =>
            n === 2 ? (
              <button key={n} type="button" aria-pressed="true" className="h-[36px] border-2 border-t-[#696969] border-r-white border-b-white border-l-[#696969] bg-[#f0f0f0]">2</button>
            ) : (
              <Btn key={n} className="h-[36px] bg-[#f0f0f0]">{n}</Btn>
            )
          )}
        </div>
        <label className="relative mt-[17px] flex h-[18px] w-[187px] items-center overflow-hidden text-[18px] leading-[18px] whitespace-nowrap">
          <input type="checkbox" defaultChecked className={`peer h-[18px] w-[18px] shrink-0 appearance-none bg-white ${SUNKEN}`} />
          <svg className="pointer-events-none absolute left-[3px] h-[11px] w-[11px] opacity-0 peer-checked:opacity-100" viewBox="0 0 11 11" aria-hidden="true"><path d="M1 4v4l3 3 7-7V1L4 7z" /></svg>
          <span className="ml-[8px]">Use Attached Orders</span>
        </label>
        <Btn className="mt-[14px] mb-[3px] ml-[68px] h-[33px] w-[58px] bg-[#f0f0f0] text-[17px]">BE</Btn>
      </div>
    </aside>
  );
}

function MiniWindow() {
  return (
    <div className="flex h-[37px] w-[217px] items-center rounded-[10px] border-2 border-[#b4b4b4] bg-[#f4f4f4] pl-[9px] text-[#606060]">
      <svg className="h-[18px] w-[38px]" viewBox="0 0 38 18" aria-hidden="true">
        <defs>
          <linearGradient id="thumb" x1="0" y1="0" x2="1" y2="1"><stop offset="0" stopColor="#3b6fa8" /><stop offset="1" stopColor="#5cb37a" /></linearGradient>
        </defs>
        <rect x="0.5" y="0.5" width="21" height="16" rx="1" fill="#fff" stroke="#8c98a4" />
        <rect x="2" y="3" width="11" height="11" fill="url(#thumb)" />
        <path d="M15 4h2M15 7h2M19 4h2" stroke="#6c7c8c" />
        <rect x="23" y="6" width="10" height="10" rx="2" fill="#f4f4f4" stroke="#808080" strokeWidth="1.4" />
        <path d="M25 3.5h8a3 3 0 0 1 3 3V13" fill="none" stroke="#808080" strokeWidth="1.4" />
      </svg>
      <button type="button" aria-label="Maximize" className="ml-[51px]"><Square size={18} strokeWidth={1.5} /></button>
      <button type="button" aria-label="Close" className="ml-[51px]"><X size={22} strokeWidth={1.5} /></button>
    </div>
  );
}

export default function App() {
  return (
    <div className={`relative flex h-screen flex-col overflow-hidden bg-[#f0f0f0] ${ARIAL}`}>
      <Header />

      <main className="flex min-h-0 flex-1">
        <section className="flex w-[588px] shrink-0 flex-col border-b-2 border-l-2 border-[#909090] pt-[6px] pr-[2px] pl-[5px]">
          <div className="flex min-h-0 flex-1 flex-col border-t-2 border-l-2 border-[#808080]">
            <div className="min-h-0 flex-1"><ProfileChart /></div>
            <div className="flex h-[24px] items-center justify-end pr-[13px]">
              <span className="h-[5px] w-[26px] rounded-full bg-[#868686]" />
            </div>
          </div>
          <div className="h-[12px] border-t border-white" />
        </section>

        <section className="w-[513px] shrink-0 pt-[10px] pb-[2px] pl-[7px]">
          <div className="h-full border-t-2 border-l-2 border-[#808080]"><SwingChart /></div>
        </section>

        <section className="ml-[7px] flex min-w-0 flex-1 flex-col border-b border-l border-black bg-[#b9d1ea]">
          <div className={`mt-[2px] flex h-[43px] items-center bg-gradient-to-b from-[#98b4d2] to-[#b9d1ea] pr-[5px] pl-[122px] text-[17px] text-[#101820] ${SEGOE}`}>
            <h2 className="mt-[9px] flex-1 whitespace-pre">{"NQH6.CME  2 Min  #3 | E-Mini NASDAQ 100 - CME (Mar26)"}</h2>
            <div className="mt-[8px] flex gap-[3px]">
              <button type="button" aria-label="Minimize chart" className="flex h-[28px] w-[49px] items-center justify-center rounded-sm border-2 border-[#5f7896] bg-gradient-to-b from-[#c6d8ea] from-45% to-[#98b0cc] to-55%">
                <span className="mt-[3px] h-[6px] w-[17px] border border-[#505a68] bg-white" />
              </button>
              <button type="button" aria-label="Maximize chart" className="flex h-[28px] w-[49px] items-center justify-center rounded-sm border-2 border-[#5f7896] bg-gradient-to-b from-[#c6d8ea] from-45% to-[#98b0cc] to-55%">
                <span className="flex h-[15px] w-[17px] items-center justify-center border border-[#505a68] bg-white"><span className="h-[7px] w-[9px] border border-[#505a68] bg-[#a9bdd6]" /></span>
              </button>
              <button type="button" aria-label="Close chart" className="flex h-[28px] w-[49px] items-center justify-center rounded-sm border-2 border-[#4a1822] bg-gradient-to-b from-[#e29a8e] from-45% to-[#b83c26] to-55%">
                <svg className="h-[16px] w-[18px]" viewBox="0 0 18 16" aria-hidden="true">
                  <path d="M1 2l3-1 5 4 5-4 3 1v2l-4 4 4 4v2l-3 1-5-4-5 4-3-1v-2l4-4-4-4z" fill="#f4f4f4" stroke="#5a4048" />
                </svg>
              </button>
            </div>
          </div>
          <div className="mr-[4px] ml-[10px] min-h-0 flex-1 border-t-2 border-r border-b border-l-2 border-t-[#606060] border-r-white border-b-white border-l-[#696969]">
            <CandleChart />
          </div>
          <div className="h-[12px] border-b border-[#20c0d8]" />
        </section>
      </main>

      <footer className="flex h-[38px] items-start border-t border-white pl-[3px]">
        <div className="flex h-full w-[463px] items-start">
          <span className="w-[8px] overflow-hidden text-[23px] leading-[37px] font-bold">NQ</span>
          <MiniWindow />
          <span className="flex w-[20px] justify-end overflow-hidden text-[23px] leading-[37px] font-bold">MP</span>
          <MiniWindow />
        </div>
      </footer>

      <OrderPanel />
    </div>
  );
}
